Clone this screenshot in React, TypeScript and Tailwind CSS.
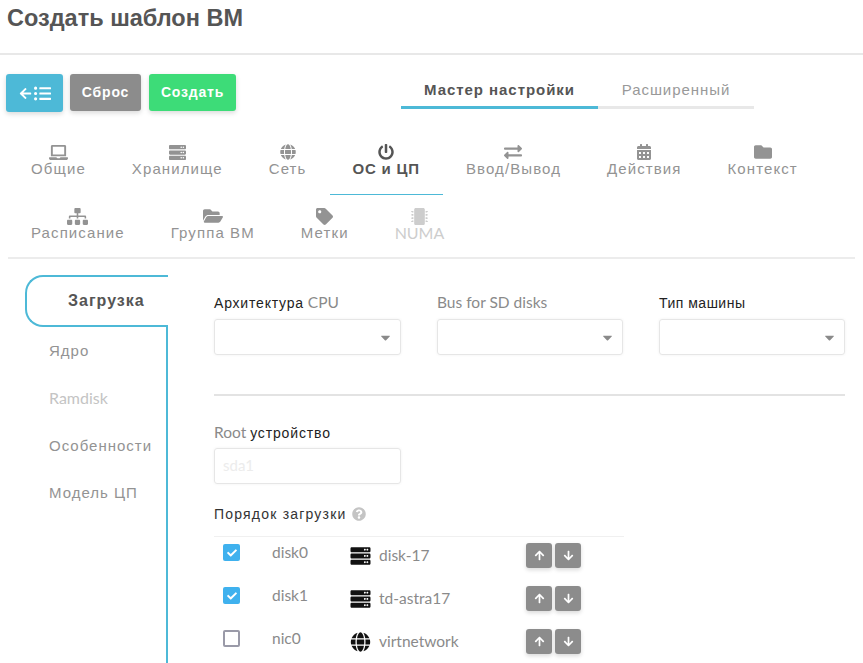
import { FaArrowDown, FaArrowLeft, FaArrowUp, FaCalendarAlt, FaCaretDown, FaCheck, FaExchangeAlt, FaFolder, FaFolderOpen, FaGlobe, FaLaptop, FaListUl, FaMicrochip, FaPowerOff, FaQuestionCircle, FaServer, FaSitemap, FaTag } from 'react-icons/fa';
import type { ComponentType, ReactNode } from 'react';

type Tab = { label: string; icon: ComponentType<{ className?: string }>; size: string; active?: boolean; disabled?: boolean };

const tabs: Tab[] = [
  { label: 'Общие', icon: FaLaptop, size: 'text-[19px]' },
  { label: 'Хранилище', icon: FaServer, size: 'text-[17px]' },
  { label: 'Сеть', icon: FaGlobe, size: 'text-[16px]' },
  { label: 'ОС и ЦП', icon: FaPowerOff, size: 'text-[16px]', active: true },
  { label: 'Ввод/Вывод', icon: FaExchangeAlt, size: 'text-[18px]' },
  { label: 'Действия', icon: FaCalendarAlt, size: 'text-[16px]' },
  { label: 'Контекст', icon: FaFolder, size: 'text-[18px]' },
  { label: 'Расписание', icon: FaSitemap, size: 'text-[21px]' },
  { label: 'Группа ВМ', icon: FaFolderOpen, size: 'text-[20px]' },
  { label: 'Метки', icon: FaTag, size: 'text-[17px]' },
  { label: 'NUMA', icon: FaMicrochip, size: 'text-[17px]', disabled: true },
];

const rows = [
  { id: 'disk0', name: 'disk-17', icon: FaServer, checked: true },
  { id: 'disk1', name: 'td-astra17', icon: FaServer, checked: true },
  { id: 'nic0', name: 'virtnetwork', icon: FaGlobe, checked: false },
];

function SelectField({ label }: { label: ReactNode }) {
  return (
    <div className="w-[186px] first:w-[187px]">
      <div className="h-[26px] text-[15.5px] leading-[18px] text-[#8a8a8a]">{label}</div>
      <div className="h-9 rounded-[3px] border border-[#e6e6e6] shadow-[0_0_3px_rgba(0,0,0,0.06)] flex items-center justify-end pr-[7px]">
        <FaCaretDown className="text-[#8a8a8a] text-[15px]" />
      </div>
    </div>
  );
}

function OrderRow({ row }: { row: (typeof rows)[number] }) {
  const Icon = row.icon;
  return (
    <div className="h-[37px] flex items-center text-[15.5px] text-[#8a8a8a]">
      <div className="w-[58px] pl-[9px] -mt-[6px]">
        {row.checked ? (
          <div className="w-[17px] h-[17px] rounded-[2px] bg-[#3fb1ee] flex items-center justify-center">
            <FaCheck className="text-white text-[10px]" />
          </div>
        ) : (
          <div className="w-[17px] h-[17px] rounded-[2px] border-2 border-[#9a9aa8]" />
        )}
      </div>
      <div className="w-[78px] -mt-[6px]">{row.id}</div>
      <Icon className="text-[#111] text-[20px] w-[21px] shrink-0" />
      <div className="w-[155px] pl-2">{row.name}</div>
      <div className="flex gap-[3px]">
        {[FaArrowUp, FaArrowDown].map((Arrow, i) => (
          <div key={i} className="w-[26px] h-[25px] rounded-[3px] bg-[#8c8c8c] shadow-[0_2px_4px_rgba(0,0,0,0.15)] flex items-center justify-center">
            <Arrow className="text-white text-[11px]" />
          </div>
        ))}
      </div>
    </div>
  );
}

export default function App() {
  return (
    <div className="h-[663px] overflow-hidden bg-white font-['Lato','Liberation_Sans',sans-serif]">
      <div className="h-[55px] border-b-2 border-[#e8e8e8] pl-[7px] pt-[3px]">
        <h1 className="text-[23.5px] leading-[30px] font-bold text-[#555] font-['Liberation_Sans',sans-serif]">Создать шаблон ВМ</h1>
      </div>

      <div className="flex items-start pl-[6px] pt-[19px]">
        <div className="flex w-[395px] font-['Liberation_Sans',sans-serif] text-[14px] font-bold text-white tracking-[0.8px]">
          <button className="w-[57px] h-[38px] rounded-[3px] bg-[#4db9d7] shadow-[0_2px_5px_rgba(0,0,0,0.15)] flex items-center justify-center gap-[2px]">
            <FaArrowLeft className="text-[13px]" />
            <FaListUl className="text-[17px]" />
          </button>
          <button className="ml-[7px] w-[71px] h-[37px] rounded-[3px] bg-[#8c8c8c] shadow-[0_2px_5px_rgba(0,0,0,0.15)]">Сброс</button>
          <button className="ml-2 w-[87px] h-[37px] rounded-[3px] bg-[#3ddc78] shadow-[0_2px_5px_rgba(0,0,0,0.15)]">Создать</button>
        </div>
        <div className="flex mt-[1px] font-['Liberation_Sans',sans-serif] text-[15px] tracking-[0.95px]">
          <div className="w-[197px] h-[34px] border-b-[3px] border-[#4db9d7] text-center leading-[30px] font-bold text-[#555]">Мастер настройки</div>
          <div className="w-[156px] h-[34px] border-b-[3px] border-[#e8e8e8] text-center leading-[30px] text-[#999]">Расширенный</div>
        </div>
      </div>

      <div className="mx-2 mt-[21px] h-[126px] border-b-2 border-[#ececec] flex flex-wrap content-start font-['Liberation_Sans',sans-serif] text-[15px] tracking-[1.1px]">
        {tabs.map((t) => {
          const Icon = t.icon;
          return (
            <div
              key={t.label}
              className={`h-[62px] mb-[2px] px-[23px] flex flex-col items-center pt-[11px] border-b ${
                t.active ? 'border-[#4db9d7] text-[#555] font-bold tracking-[0.8px]' : 'border-transparent'
              } ${t.disabled ? "text-[#cdcdcd] font-['Lato',sans-serif] text-[16px] tracking-normal" : t.active ? '' : 'text-[#939393]'}`}
            >
              <div className={`h-4 flex items-center justify-center ${t.size}`}>
                <Icon />
              </div>
              <span className="leading-[20px] -mt-[1px] whitespace-nowrap">{t.label}</span>
            </div>
          );
        })}
      </div>

      <div className="flex mt-[16px]">
        <div className="w-[168px] shrink-0 pl-[25px] text-[15px]">
          <div className="h-[52px] rounded-l-[18px] border-2 border-r-0 border-[#4db9d7] flex items-center pl-[41px] pb-[1px] font-bold text-[#555] font-['Liberation_Sans',sans-serif] text-[16px] tracking-[1px]">
            Загрузка
          </div>
          <div className="h-[340px] border-r-2 border-[#4db9d7] pl-6 text-[#939393] tracking-[1px] font-['Liberation_Sans',sans-serif]">
            <div className="h-[47px] leading-[47px]">Ядро</div>
            <div className="h-[47px] leading-[47px] text-[#c4c4c4] font-['Lato',sans-serif] text-[16px] tracking-normal">Ramdisk</div>
            <div className="h-[48px] leading-[49px]">Особенности</div>
            <div className="h-[47px] leading-[47px]">Модель ЦП</div>
          </div>
        </div>

        <div className="pl-[46px] pt-[18px] w-[677px]">
          <div className="flex justify-between">
            <SelectField label={<><span className="text-[#222] font-['Liberation_Sans',sans-serif] text-[14px] tracking-[0.8px]">Архитектура</span> CPU</>} />
            <SelectField label="Bus for SD disks" />
            <SelectField label={<span className="text-[#222] font-['Liberation_Sans',sans-serif] text-[14px] tracking-[0.5px]">Тип машины</span>} />
          </div>
          <div className="mt-[39px] h-[2px] bg-[#e3e3e3]" />
          <div className="mt-[25px] h-[27px] text-[15.5px] leading-[22px] text-[#8a8a8a]">
            Root <span className="text-[#222] font-['Liberation_Sans',sans-serif] text-[14px] tracking-[0.85px]">устройство</span>
          </div>
          <div className="w-[187px] h-9 rounded-[3px] border border-[#e6e6e6] shadow-[0_0_3px_rgba(0,0,0,0.06)] pl-2 leading-[32px] text-[15px] text-[#ececec]">sda1</div>
          <div className="mt-5 flex items-center gap-[5px] text-[14px] leading-[20px] text-[#333] font-['Liberation_Sans',sans-serif] tracking-[1.2px]">
            Порядок загрузки
            <FaQuestionCircle className="text-[#c4c4c4] text-[14px]" />
          </div>
          <div className="w-[410px] mt-[12px] border-t border-[#f0f0f0] flex flex-col gap-[6px]">
            {rows.map((r) => (
              <OrderRow key={r.id} row={r} />
            ))}
          </div>
        </div>
      </div>
    </div>
  );
}
